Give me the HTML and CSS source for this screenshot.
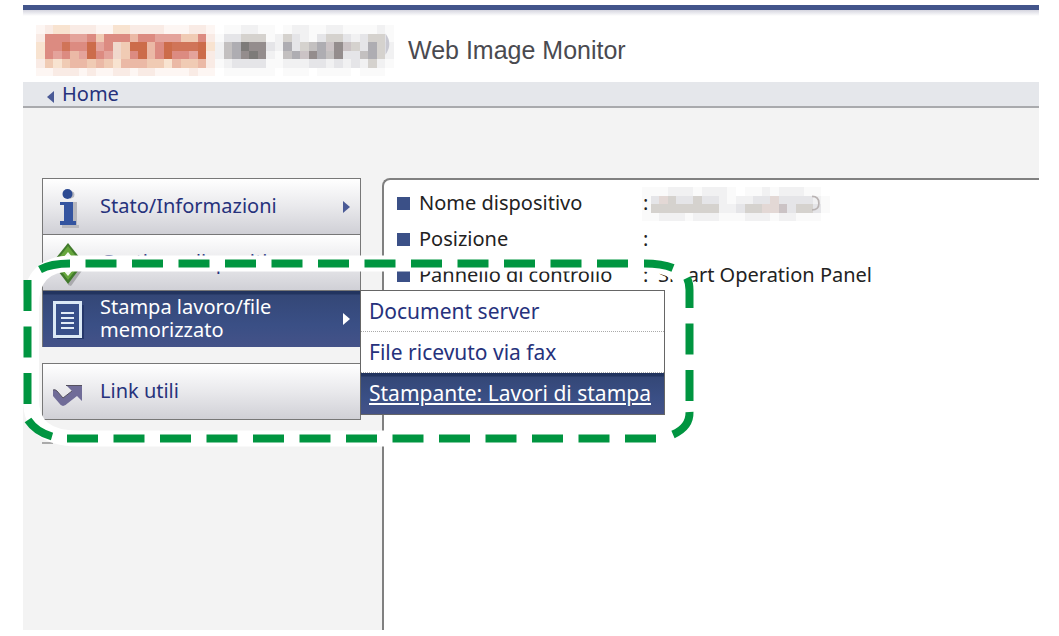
FILE: index.html
```html
<!DOCTYPE html>
<html lang="it">
<head>
    <meta charset="UTF-8">
    <meta name="viewport" content="width=device-width, initial-scale=1.0">
    <title>Web Image Monitor</title>
    <link rel="stylesheet" href="styles.css">
</head>
<body>
    <div class="page">
        <header class="header">
            <svg class="brand" viewBox="0 0 42 6" preserveAspectRatio="none" shape-rendering="crispEdges" aria-hidden="true">
                <g id="brand-mosaic"></g>
                <path d="M41 1q.9 1.200 0 2.500z" fill="#c9c9d2" shape-rendering="auto"/>
            </svg>
            <h1>Web Image Monitor</h1>
        </header>

        <nav class="breadcrumb">
            <a href="#"><svg width="7" height="12" viewBox="0 0 7 12" aria-hidden="true"><path d="M7 0v12L0 6z" fill="#4a5a96"/></svg>Home</a>
        </nav>

        <div class="content">
            <nav class="sidebar">
                <ul class="menu">
                    <li>
                        <a class="menu-item" href="#">
                            <svg class="icon" width="32" height="44" viewBox="0 0 32 44" aria-hidden="true">
                                <path d="M10 40h17v3H10zM21 17h4v24h-4zM18 6q6 0 4 6l-4 2z" fill="#b8b8be"/>
                                <circle cx="15.500" cy="9" r="5" fill="#2c4a92"/>
                                <path d="M8 17h13v19h3v4H8v-4h4V20H8z" fill="#3454a0"/>
                            </svg>
                            <span>Stato/Informazioni</span>
                            <svg class="arrow" width="7" height="12" viewBox="0 0 7 12" aria-hidden="true"><path d="M0 0v12l7-6z"/></svg>
                        </a>
                    </li>
                    <li>
                        <a class="menu-item" href="#">
                            <svg class="icon" width="32" height="44" viewBox="0 0 32 44" aria-hidden="true">
                                <path d="M16 6l18 18-15 21-3-1z" fill="#a9a9ad"/>
                                <path d="M16 2l16 20-16 21L0 22z" fill="#417a2c"/>
                                <path d="M16 5l13 17-13 17L3 22z" fill="#66a63c"/>
                                <path d="M16 11l5 6h-3v4h4v-3l5 4-5 5v-3h-4v5h3l-5 6-5-6h3v-5h-4v3l-5-5 5-4v3h4v-4h-3z" fill="#f3f8ef"/>
                            </svg>
                            <span>Gestione dispositivo</span>
                            <svg class="arrow" width="7" height="12" viewBox="0 0 7 12" aria-hidden="true"><path d="M0 0v12l7-6z"/></svg>
                        </a>
                    </li>
                    <li class="has-submenu">
                        <a class="menu-item active" href="#">
                            <svg class="icon" width="32" height="44" viewBox="0 0 32 44" aria-hidden="true">
                                <path d="M5 8h27v34H5z" fill="#25376a"/>
                                <path d="M2.500 5.500h26v34h-26z" fill="#38508a" stroke="#dbe9f6" stroke-width="3"/>
                                <path d="M9 16h13M9 21h13M9 26h13M9 31h13" stroke="#e2ecf6" stroke-width="2"/>
                            </svg>
                            <span>Stampa lavoro/file memorizzato</span>
                            <svg class="arrow" width="7" height="12" viewBox="0 0 7 12" aria-hidden="true"><path d="M0 0v12l7-6z"/></svg>
                        </a>
                        <ul class="submenu">
                            <li><a href="#">Document server</a></li>
                            <li><a href="#">File ricevuto via fax</a></li>
                            <li><a class="selected" href="#">Stampante: Lavori di stampa</a></li>
                        </ul>
                    </li>
                </ul>
                <ul class="menu">
                    <li>
                        <a class="menu-item" href="#">
                            <svg class="icon" width="32" height="44" viewBox="0 0 32 44" aria-hidden="true">
                                <path d="M1 20q2-1 4 1l6 7 9-7-6-6h16v16l-5-5-9 7q-3 3-5 3-2 0-4-3l-6-7z" fill="#706c98"/>
                                <path d="M1 20q2-1 4 1l6 7 9-7M14 15.500h16" fill="none" stroke="#55515f"/>
                            </svg>
                            <span>Link utili</span>
                        </a>
                    </li>
                </ul>
            </nav>

            <main class="panel">
                <table class="info">
                    <tr>
                        <th scope="row">Nome dispositivo</th>
                        <td>
                            <span class="colon">:</span><svg class="device" viewBox="0 0 22 4" preserveAspectRatio="none" shape-rendering="crispEdges" aria-hidden="true">
                                <g id="device-mosaic"></g>
                                <path d="M19.900 1.100q.8 0 .8.800t-.8.800" fill="none" stroke="#b9b3b3" stroke-width=".2" shape-rendering="auto"/>
                            </svg>
                        </td>
                    </tr>
                    <tr>
                        <th scope="row">Posizione</th>
                        <td><span class="colon">:</span></td>
                    </tr>
                    <tr>
                        <th scope="row">Pannello di controllo</th>
                        <td><span class="colon">:</span>Smart Operation Panel</td>
                    </tr>
                </table>
            </main>
        </div>

        <!-- dashed frame around the open menu -->
        <svg class="callout" width="720" height="220" viewBox="0 240 720 220" aria-hidden="true">
            <path d="M42 443h11" stroke="#aaa" stroke-width="2"/>
            <path d="M72 263.500H640Q689 263.500 689 302V400Q689 438.500 652 438.500H78Q31 438.500 31 400V305Q31 263.500 72 263.500z" fill="none" stroke="#fff" stroke-width="16"/>
            <g fill="none" stroke="#009540" stroke-width="8">
                <path d="M85.500 263.500H630" stroke-dasharray="31 15.500"/>
                <path d="M644 263.500Q662 263.500 673 268"/>
                <path d="M687 278Q689.500 283 689.500 290V308"/>
                <path d="M689.500 323.500V402" stroke-dasharray="31 15.500"/>
                <path d="M689.500 412Q690 427 673 434.500"/>
                <path d="M67 438.500H657" stroke-dasharray="31 15.500"/>
                <path d="M52 436.500Q36 432 28 420"/>
                <path d="M27.500 404V280" stroke-dasharray="31 15.500"/>
                <path d="M40 269.500Q51 263.500 70 263.500"/>
            </g>
        </svg>
    </div>

    <script>
        // one letter per cell, "." is empty
        const palette = {
            a: '#fdf6f3', b: '#f9ebe5', c: '#f8e3d0', d: '#f0cbb4', e: '#ebb9a6', f: '#e4a39b',
            g: '#dc8b81', h: '#d07458', i: '#cc6c4a', j: '#f0d8cc',
            k: '#fafafa', l: '#f1f1f2', m: '#e5e5e8', n: '#d5d2ce', o: '#c3c0c0', p: '#aeadb2',
            q: '#948d8d', r: '#7d7b79', s: '#e3d8d5', t: '#cbc3c5'
        };

        function drawMosaic(id, rows) {
            let rects = '';
            rows.forEach((row, y) => {
                [...row].forEach((cell, x) => {
                    if (cell !== '.') {
                        rects += `<rect x="${x}" y="${y}" width="1" height="1" fill="${palette[cell]}"/>`;
                    }
                });
            });
            document.getElementById(id).innerHTML = rects;
        }

        drawMosaic('brand-mosaic', [
            'abccbbbaaccbbbbaaabba.kkllkk.kllkkllkkkklk',
            'bgggffgdgggeggfffddgbkmmnnnklnmlkmnnmlmnnk',
            'cgghggifgjdiiegihhhicloprqqmlpmnoptqtnmpnl',
            'cgfgefigfjdgiegiggfiblopqrqlkoptqpoqmmopnl',
            'bdcdeededceeeddceddebklmmmmkklllmmlmlmlnlk',
            'aabbbabaabbabbaaaabaa.kkkkkk.kkk.kkkk.kkk.'
        ]);
        drawMosaic('device-mosaic', [
            'kkklllklllk.kklklllkk.',
            'kmsnmmnmmlkllmmsmmmmlk',
            'knnnnnnnnllmnnsstmnnmk',
            'kklllklllkkklllkllkkk.'
        ]);
    </script>
</body>
</html>
```

FILE: styles.css
```css
* {
    box-sizing: border-box;
}
body {
    margin: 0;
    background-color: #fff;
    font-family: "Noto Sans", sans-serif;
    font-size: 20px;
    color: #222;
}
a {
    color: #26327c;
    text-decoration: none;
}
ul {
    list-style: none;
    margin: 0;
    padding: 0;
}
.page {
    position: relative;
    display: flex;
    flex-direction: column;
    min-height: calc(100vh - 11px);
    margin: 5px 20px 6px 23px;
    background-color: #f3f3f3;
}
.header {
    display: flex;
    align-items: center;
    height: 77px;
    padding: 9px 13px 0;
    border-top: 5px solid #43558b;
    background: linear-gradient(#d5d5df, #fff 6px);
}
.brand {
    width: 358px;
    height: 51px;
}
.header h1 {
    margin: 0 0 0 14px;
    font-family: "Liberation Sans", sans-serif;
    font-size: 25px;
    font-weight: normal;
    color: #4a4a50;
}
.breadcrumb {
    height: 26px;
    padding-left: 24px;
    border-bottom: 2px solid #a9aaad;
    background-color: #e5e7eb;
    line-height: 24px;
}
.breadcrumb svg {
    margin-right: 8px;
    vertical-align: -2px;
}
.content {
    display: flex;
    flex: 1;
    padding: 70px 0 0 19px;
}
.sidebar {
    width: 319px;
    margin-right: 21px;
}
.menu {
    margin-bottom: 16px;
    border: 1px solid #777;
    border-bottom-width: 0;
}
.menu-item {
    display: flex;
    align-items: center;
    height: 56px;
    padding: 0 10px 0 9px;
    border-bottom: 1px solid #777;
    background: linear-gradient(#fff, #e9e9ec 50%, #d0d0d6);
    line-height: 23px;
}
.menu-item .icon {
    flex: none;
    margin-right: 16px;
    overflow: visible;
}
.menu-item span {
    flex: 1;
    padding: 0 30px 2px 0;
}
.arrow {
    flex: none;
    fill: #4a5a96;
}
.menu-item.active,
.submenu .selected {
    border-bottom: 0;
    background: linear-gradient(#22345f 3px, #344777 4px, #3a4f85 60%, #445288);
    color: #fff;
}
.active .arrow {
    fill: #fff;
}
.has-submenu {
    position: relative;
}
.submenu {
    position: absolute;
    top: -1px;
    left: 100%;
    z-index: 1;
    width: 305px;
    border: 1px solid #666;
    background-color: #fff;
    font-size: 21px;
}
.submenu a {
    display: block;
    height: 41px;
    padding-left: 8px;
    border-bottom: 1px dotted #aaa;
    line-height: 40px;
    white-space: nowrap;
}
.submenu .selected {
    text-decoration: underline;
}
.panel {
    flex: 1;
    padding: 4px 13px;
    border: solid #808080;
    border-width: 2px 0 0 2px;
    border-top-left-radius: 8px;
    background-color: #fff;
}
.info {
    border-collapse: collapse;
}
.info th,
.info td {
    height: 36px;
    padding: 0;
    font-weight: normal;
    line-height: 35px;
    text-align: left;
    white-space: nowrap;
}
.info th {
    width: 246px;
}
.info th::before {
    content: "";
    display: inline-block;
    width: 13px;
    height: 13px;
    margin-right: 9px;
    background-color: #3b5087;
}
.colon {
    position: relative;
    z-index: 1;
    display: inline-block;
    width: 15px;
}
.device {
    width: 188px;
    height: 34px;
    margin: -10px 0 -10px -16px;
    vertical-align: middle;
}
.callout {
    position: absolute;
    top: 235px;
    left: -23px;
    z-index: 2;
    pointer-events: none;
}
```
